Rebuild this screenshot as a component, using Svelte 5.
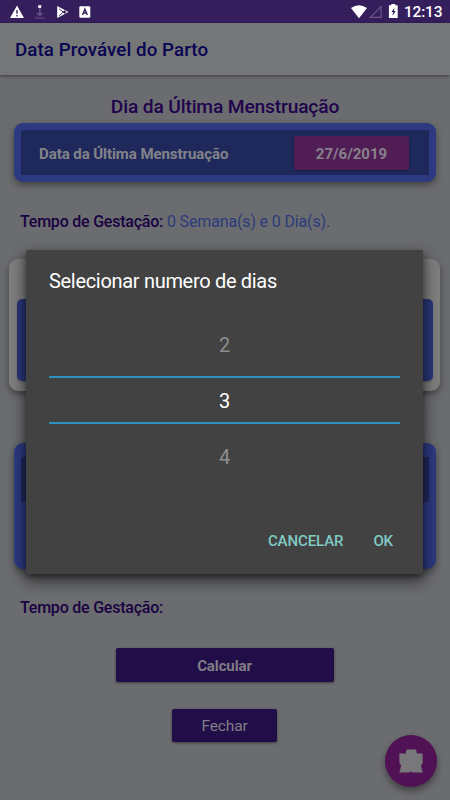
<script>
  const days = [2, 3, 4];
  let selected = $state(3);
</script>

<div class="screen">
  <header class="status">
    <svg width="450" height="23" viewBox="0 0 450 23" aria-hidden="true">
      <path d="M17 5.4 L24 18 H10 Z" fill="#fff" />
      <path d="M17 10v3.7M17 15v1.5" stroke="#351e5c" stroke-width="1.4" />
      <g fill="#665286"><path d="M39 9h1.6v4h3l-3.8 3.5-3.8-3.5h3zM34.6 17.4h10.2v1.1H34.6z" /></g>
      <rect x="38.2" y="5.1" width="3" height="3" fill="#eee9f3" />
      <path d="M57.2 6 L68.5 12 L57.2 18 Z" fill="#fff" />
      <path d="M59 8.7l6 4.8M59 15.8l6-5" stroke="#351e5c" stroke-width=".9" />
      <path d="M62.6 12l2-1.4 2 1.4-2 1.4z" fill="#351e5c" />
      <rect x="79.3" y="6.2" width="11" height="11.6" rx="1.3" fill="#fff" />
      <path d="M82.5 15l2.4-6 2.4 6M83.4 13h3" fill="none" stroke="#351e5c" stroke-width="1.35" />
      <path d="M351 8 Q359 2.3 367 8 L359 18.2 Z" fill="#fff" />
      <path d="M381 6.7V17.4H370.3Z" fill="none" stroke="#6b578b" stroke-width="1.2" />
      <path d="M391.3 5.3V4h4v1.3h2.4v12.6h-8.8V5.3z" fill="#fff" />
      <path d="M394.6 7.7l-3.2 4.3h1.8l-.9 3.8 3.5-4.8h-2z" fill="#351e5c" />
    </svg>
    <span class="clock">12:13</span>
  </header>

  <div class="bar">Data Provável do Parto</div>

  <main>
    <h1>Dia da Última Menstruação</h1>
    <section class="card date-card">
      <div class="row">
        <span class="date-label">Data da Última Menstruação</span>
        <button class="date">27/6/2019</button>
      </div>
    </section>
    <p class="age"><b>Tempo de Gestação:</b> <span class="value">0 Semana(s) e 0 Dia(s).</span></p>
    <section class="pale"><div></div></section>
    <section class="card result"><div></div></section>
    <p class="age second"><b>Tempo de Gestação:</b></p>
    <button class="action calc">Calcular</button>
    <button class="action close">Fechar</button>
  </main>

  <div class="dialog" role="dialog" aria-label="Selecionar numero de dias">
    <h2>Selecionar numero de dias</h2>
    <div class="picker">
      {#each days as day}
        <button class="day" class:selected={day === selected} onclick={() => (selected = day)}>{day}</button>
      {/each}
    </div>
    <div class="buttons">
      <button>CANCELAR</button>
      <button>OK</button>
    </div>
  </div>

  <button class="fab" aria-label="Extensões">
    <svg width="52" height="52" viewBox="0 0 52 52" aria-hidden="true">
      <path d="M21.2 15.6 Q21.5 14.4 22.5 14.4H30Q31 14.4 31.3 15.6L31.8 18.4H37.6V28L36 30.5L37.6 37.4H27.8L26 36.4L24.2 37.4H14.4L16.2 30.5L14.4 28V18.4H20.7Z" fill="#78787a" />
    </svg>
  </button>
</div>

<style>
  :global(body) { margin: 0; }
  .screen, .screen * { box-sizing: border-box; }
  .screen {
    position: relative;
    width: 450px;
    height: 800px;
    overflow: hidden;
    background: #6b6c6f;
    font-family: Roboto, "Liberation Sans", sans-serif;
  }
  button { font-family: inherit; border: 0; margin: 0; padding: 0; background: none; white-space: nowrap; }
  h1, h2, p { margin: 0; white-space: nowrap; }
  .status { display: flex; height: 23px; background: #351e5c; }
  .status svg { flex: none; margin-right: -450px; }
  .clock { margin-left: 404px; line-height: 25px; font-size: 15.5px; font-weight: 500; letter-spacing: -.2px; color: #fff; }
  .bar {
    position: relative;
    height: 52px;
    padding-left: 15px;
    background: #757678;
    box-shadow: 0 1px 3px rgba(0, 0, 0, .45);
    line-height: 54px;
    font-size: 18.7px;
    font-weight: 500;
    letter-spacing: .1px;
    color: #070452;
  }
  main { display: flex; flex-direction: column; align-items: center; padding-top: 19px; }
  h1 { height: 29.4px; line-height: 25px; font-size: 19.2px; font-weight: 500; letter-spacing: -.15px; color: #21034d; }
  .card {
    width: 422px;
    padding: 7px;
    border-radius: 9px;
    background: #2d3980;
    box-shadow: 0 3px 7px rgba(0, 0, 0, .4);
  }
  .date-card { height: 58.6px; }
  .row { display: flex; align-items: center; justify-content: space-between; height: 44.8px; padding: 0 20px 0 18px; background: #1f285b; }
  .date-label { padding-top: 2px; font-size: 15px; font-weight: 700; letter-spacing: -.07px; color: #828389; }
  .date {
    width: 115px;
    height: 34px;
    padding-top: 2px;
    border-radius: 2px;
    background: #501d54;
    box-shadow: 0 1px 2px rgba(0, 0, 0, .4);
    font-size: 15px;
    font-weight: 700;
    color: #88818a;
  }
  .age { align-self: flex-start; height: 24px; margin: 28px 0 0 20px; line-height: 24px; font-size: 16px; letter-spacing: -.15px; color: #190142; }
  .age b { font-weight: 500; letter-spacing: -.22px; }
  .value { color: #2c3b7c; }
  .pale { width: 431px; height: 132px; margin: 25px 1px 0 0; padding: 40px 7.5px 10px; border-radius: 9px; background: #7e7e7e; box-shadow: 0 3px 7px rgba(0, 0, 0, .4); }
  .pale div { height: 82px; border-radius: 5px; background: #2a3678; box-shadow: 0 2px 2px rgba(0, 0, 0, .15); }
  .result { height: 126px; margin-top: 52px; padding-top: 14px; }
  .result div { height: 45px; background: #1f285b; }
  .second { margin-top: 27px; }
  .action { height: 33.5px; margin-right: 1px; padding-top: 1px; border-radius: 2px; background: #210e49; box-shadow: 0 1px 3px rgba(0, 0, 0, .45); color: #807d86; }
  .calc { width: 218px; margin-top: 28.5px; padding-top: 2px; font-size: 15px; font-weight: 700; letter-spacing: -.1px; }
  .close { width: 105px; margin-top: 27px; font-size: 15.5px; letter-spacing: -.15px; }
  .dialog {
    position: absolute;
    left: 26px;
    top: 250px;
    width: 397px;
    height: 323.5px;
    padding: 16px 23px 0;
    border-radius: 2px;
    background: #424242;
    box-shadow: 0 6px 14px 2px rgba(0, 0, 0, .5), 0 3px 5px rgba(0, 0, 0, .25);
  }
  h2 { height: 50px; line-height: 30px; font-size: 20px; font-weight: 400; letter-spacing: -.31px; color: #fff; }
  .picker { display: flex; flex-direction: column; align-items: center; width: 351px; }
  .day { width: 100%; height: 60px; padding-bottom: 3px; font-size: 20px; color: #8e8e8e; }
  .day.selected { height: 48px; padding: 2px 0 0; border: solid #2e94bf; border-width: 2px 0; color: #fff; }
  .day:last-child { height: 66px; padding-bottom: 0; }
  .buttons { display: flex; justify-content: flex-end; gap: 30px; height: 30px; margin-top: 36px; padding-right: 7px; }
  .buttons button { font-size: 15px; font-weight: 500; letter-spacing: -.1px; color: #80cbc4; }
  .fab { position: absolute; left: 384.5px; top: 734.5px; width: 52px; height: 52px; border-radius: 50%; background: #501255; box-shadow: 0 4px 7px rgba(0, 0, 0, .4); }
  .fab svg { display: block; }
</style>
